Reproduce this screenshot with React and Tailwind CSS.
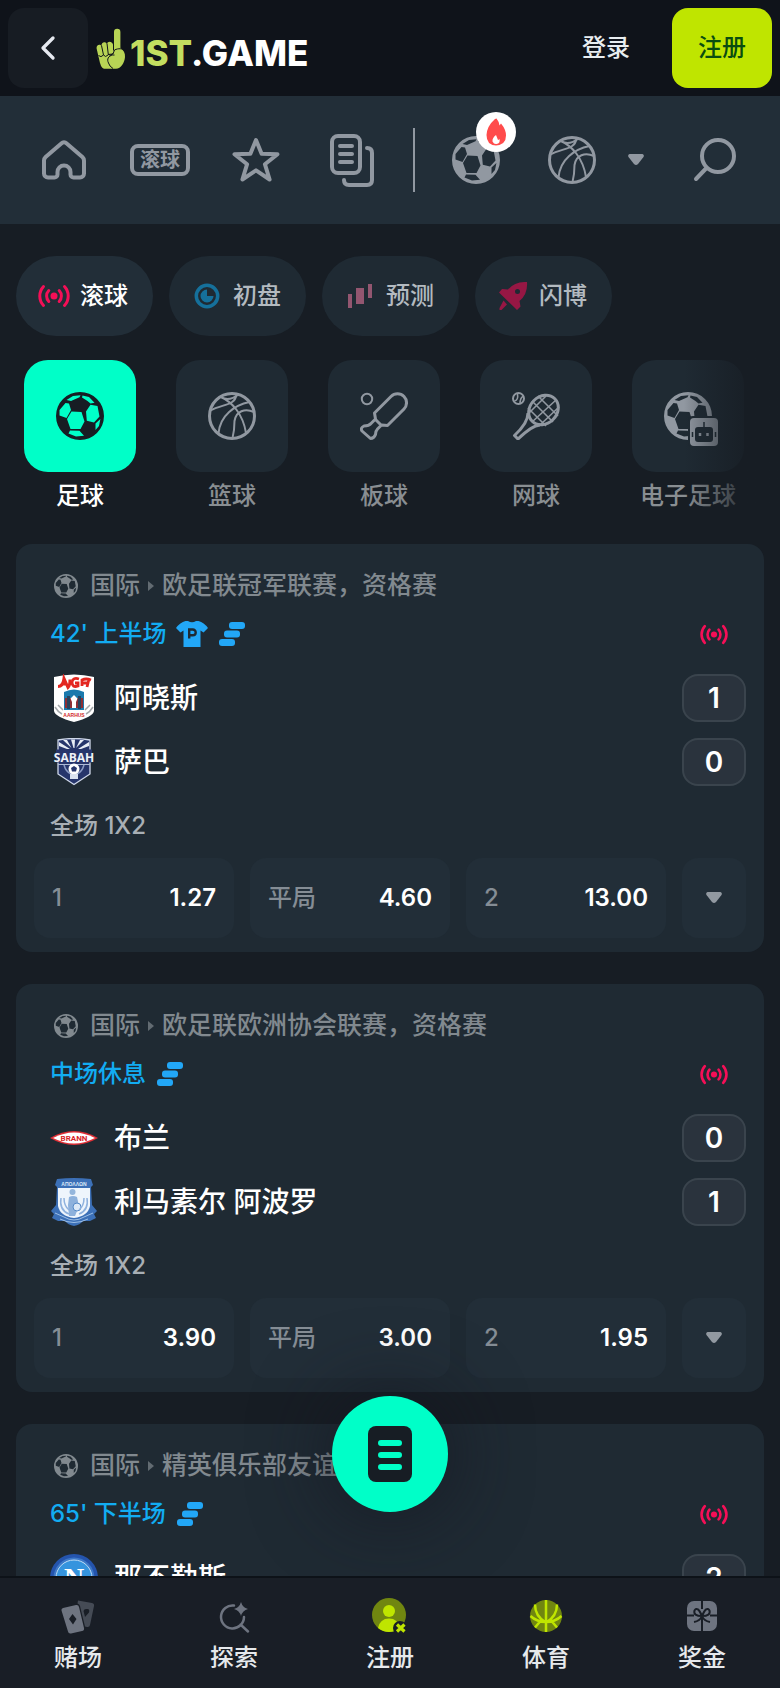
import React from 'react';
import { FiChevronLeft } from 'react-icons/fi';

const filters = [
  { icon: LiveIcon, label: '滚球', active: true },
  { icon: EarlyIcon, label: '初盘' },
  { icon: ForecastIcon, label: '预测' },
  { icon: RocketIcon, label: '闪博' },
];

const sports = [
  { icon: SoccerIcon, label: '足球', active: true },
  { icon: BasketballIcon, label: '篮球' },
  { icon: CricketIcon, label: '板球' },
  { icon: TennisIcon, label: '网球' },
  { icon: ESoccerIcon, label: '电子足球' },
];

const matches = [
  {
    league: '欧足联冠军联赛，资格赛',
    status: "42' 上半场",
    shirt: true,
    teams: [
      { crest: AarhusCrest, name: '阿晓斯', score: 1 },
      { crest: SabahCrest, name: '萨巴', score: 0 },
    ],
    odds: [['1', '1.27'], ['平局', '4.60'], ['2', '13.00']],
  },
  {
    league: '欧足联欧洲协会联赛，资格赛',
    status: '中场休息',
    teams: [
      { crest: BrannCrest, name: '布兰', score: 0 },
      { crest: ApollonCrest, name: '利马素尔 阿波罗', score: 1 },
    ],
    odds: [['1', '3.90'], ['平局', '3.00'], ['2', '1.95']],
  },
  {
    league: '精英俱乐部友谊赛',
    status: "65' 下半场",
    teams: [{ crest: NapoliCrest, name: '那不勒斯', score: 2 }],
    odds: [],
  },
];

const tabs = [
  { icon: CardsIcon, label: '赌场' },
  { icon: ExploreIcon, label: '探索' },
  { icon: RegisterIcon, label: '注册' },
  { icon: SportTabIcon, label: '体育' },
  { icon: GiftIcon, label: '奖金' },
];

function LogoHand() {
  return (
    <svg viewBox="0 0 30 41" className="w-[30px] h-[41px]" fill="#b8d455" stroke="#0f131a" strokeWidth="1">
      <path stroke="none" d="M18 22V4a3.200 3.200 0 0 1 6.400 0V20c3 2 5 5 4.600 9-.5 6-4 11.500-9 11.800H9C6 40.800 5 38 4 35L.6 20.500C0 17 4 15.500 5.500 18 5 14 9.500 13 11 16c.5-3 5-3 6 .5z" />
      <path fill="none" d="M5.500 17.500 7.500 27q2 3 4.500 0M11 15.500l1.300 11q2.500 2 4.500-1M17.500 15v7.500M2.500 27.500q2.500 2.500 5-.5M12.500 35c-2-4 0-7 4-8h2M12 26.500l5-.5 1.500-4c4-2 8-1.500 10 .5M12.500 35q1 3.500 4.500 5.500" />
    </svg>
  );
}

function HomeIcon() {
  return (
    <svg viewBox="0 0 48 48" className="size-12" fill="none" stroke="currentColor" strokeWidth="4" strokeLinejoin="round">
      <path d="M21.300 7.400a4 4 0 0 1 5.400 0L42.400 21a5 5 0 0 1 1.600 3.600V37.500a4 4 0 0 1-4 4h-6.500a3 3 0 0 1-3-3V36a6.500 6.500 0 0 0-13 0v2.500a3 3 0 0 1-3 3H8a4 4 0 0 1-4-4V24.600A5 5 0 0 1 5.600 21z" />
    </svg>
  );
}

function StarIcon() {
  return (
    <svg viewBox="0 0 48 48" className="size-12" fill="none" stroke="currentColor" strokeWidth="4" strokeLinejoin="round">
      <path d="M24 4 29.600 17.800 45.500 18.200 32.900 28.200 37.600 43.500 24 34.300 10.400 43.500 15.100 28.200 2.500 18.200 18.400 17.800z" />
    </svg>
  );
}

function BetsIcon() {
  return (
    <svg viewBox="0 0 48 56" className="w-12 h-14" fill="none" stroke="currentColor" strokeWidth="4" strokeLinecap="round">
      <rect x="4" y="4" width="28" height="37" rx="6" />
      <path d="M12 14h12M12 22h12M12 30h12M39 16q5 0 5 5V48q0 5-5 5H21q-5 0-5-5" />
    </svg>
  );
}

function SearchIcon() {
  return (
    <svg viewBox="0 0 48 48" className="size-12" fill="none" stroke="currentColor" strokeWidth="4" strokeLinecap="round">
      <circle cx="26" cy="20" r="16" />
      <path d="M14.500 32 4 43" />
    </svg>
  );
}

function Caret({ className = 'w-4 h-3' }) {
  return (
    <svg viewBox="0 0 16 12" className={className} fill="currentColor">
      <path d="M1.500 0h13q2.300 1 .8 3.200L10 10q-2 2-4 0L.7 3.200Q-.8 1 1.500 0z" />
    </svg>
  );
}

function SoccerIcon({ className = 'size-12' }) {
  return (
    <svg viewBox="0 0 48 48" className={className} fill="currentColor" fillRule="evenodd">
      <path d="M24 0a24 24 0 1 0 0 48a24 24 0 1 0 0-48zM11 27 15.500 19.500 25.500 20 28.500 29.500 24.500 37 14.500 37zM30 19.500 34.500 12.800 41.500 14 43.500 24.500 38 30.500 30.800 28.800zM3.500 18 9.500 11 13 11.500 15 18 10.500 26 3.500 23.500zM10.500 8 17 4 24.500 3.300 23.500 5.200 15 9zM26.500 3.500 33 5 38.500 10.800 34.500 11.500 31.500 9 26 5.500zM14 38.500 23.500 38.800 28 43.800 20 44.500 12.500 41.500zM39.500 31.500 44.400 27 43 34 39.500 38z" />
    </svg>
  );
}

function BasketballIcon() {
  return (
    <svg viewBox="0 0 48 48" className="size-12" fill="none" stroke="currentColor" strokeWidth="2">
      <circle cx="24" cy="24" r="22.500" strokeWidth="3" />
      <path d="M13 5C24 10 35 22 38 41M28.500 2.500C27 14 14 12 2.500 18.500M13.500 5.500q8 4 17-3M41.500 10C27 13 12 23 10.500 41.500M46 20C37 16 28 19 26.500 29Q26.500 38 24.500 46" />
    </svg>
  );
}

function CricketIcon() {
  return (
    <svg viewBox="0 0 48 48" className="size-12" fill="none" stroke="currentColor" strokeWidth="3" strokeLinejoin="round">
      <circle cx="7" cy="7" r="5.200" strokeWidth="2" />
      <path d="M14.500 21 31 4.500a9 9 0 0 1 13 0a9 9 0 0 1 0 12.500L27.500 33.500l-6-.5-4 4q-2 2-2 5.500-1.500 4-5 4L2 39q-2-3 2-5 5 0 7-2.500l4.500-4.500zM15.500 27.500l5.500 5.500" />
    </svg>
  );
}

function TennisIcon() {
  return (
    <svg viewBox="0 0 48 48" className="size-12" fill="none" stroke="currentColor" strokeWidth="2">
      <circle cx="6.500" cy="6.500" r="5.500" />
      <path d="M2.500 9q4-1 3-7M12 4q-4 1-4 8M20 9 41 30M26 4 46 24M16 16 34 34M16 22 34 4M20 30 44 8M28 33 47 15" strokeWidth="1.600" />
      <ellipse cx="31.500" cy="18" rx="16" ry="13.500" transform="rotate(-45 31.500 18)" strokeWidth="3" />
      <path d="M16 21q0 10-13.500 22.500l3.500 3.500Q20 33.500 28 33" strokeWidth="3" strokeLinejoin="round" />
    </svg>
  );
}

function ESoccerIcon() {
  return (
    <div className="relative">
      <SoccerIcon />
      <svg viewBox="0 0 32 32" className="absolute left-[24px] top-[24px] size-8">
        <rect x="0" y="0" width="32" height="32" rx="5" className="fill-[#1f2a33]" />
        <rect x="2" y="2" width="28" height="28" rx="4" fill="currentColor" />
        <rect x="7" y="11" width="18" height="15" rx="3" className="fill-[#1f2a33]" />
        <path d="M16 6v5M4.500 16v5M27.500 16v5" className="stroke-[#1f2a33]" strokeWidth="1.500" />
        <path d="M12 17v3M19.500 17v3" stroke="currentColor" strokeWidth="2.500" />
      </svg>
    </div>
  );
}

function LiveIcon({ className = 'w-8 h-6' }) {
  return (
    <svg viewBox="0 0 32 24" className={className} fill="none" stroke="#f50f57" strokeWidth="3" strokeLinecap="round">
      <circle cx="16" cy="12" r="3.500" fill="#f50f57" stroke="none" />
      <path d="M5.500 2.500a14 14 0 0 0 0 19M10.800 6.500a8 8 0 0 0 0 11M26.500 2.500a14 14 0 0 1 0 19M21.200 6.500a8 8 0 0 1 0 11" />
    </svg>
  );
}

function EarlyIcon() {
  return (
    <svg viewBox="0 0 32 32" className="size-8" fill="none">
      <circle cx="16" cy="16" r="10.700" stroke="#15709b" strokeWidth="3.500" />
      <path d="M16 9.500V16h6.500A6.500 6.500 0 1 1 16 9.500z" fill="#15709b" />
    </svg>
  );
}

function ForecastIcon() {
  return (
    <svg viewBox="0 0 32 32" className="size-8" fill="#935670">
      <path d="M4 14h4v14H4zM12 8h8v16h-8zM24 4h4v14h-4z" />
    </svg>
  );
}

function RocketIcon() {
  return (
    <svg viewBox="0 0 32 32" className="size-8" fill="#961744" fillRule="evenodd">
      <path d="M30 2Q18 1 11 9.500L5 9 2 12.500 20 30 23.500 26.500 22.500 21Q31 14 30 2zM20.500 9a2.500 2.500 0 1 1 0 5 2.500 2.500 0 1 1 0-5zM6.500 20.500 10 24.500 4.500 30H2.500V28z" />
    </svg>
  );
}

function ShirtIcon() {
  return (
    <svg viewBox="0 0 32 28" className="w-8 h-7">
      <path d="M9.500 1h2.500q4 2.500 8 0h2.500Q28 2.500 32 8l-4.500 4.500L24.500 10.500V27H7.500V10.500L4.500 12.500 0 8Q4 2.500 9.500 1z" fill="#22a7f7" />
      <path d="M13.200 18.500V9.500h3.600a2.900 2.900 0 0 1 0 5.800h-3.600" fill="none" stroke="#1f2a33" strokeWidth="2.400" />
    </svg>
  );
}

function StackIcon() {
  return (
    <svg viewBox="0 0 28 26" className="w-7 h-[26px]" fill="#22a7f7">
      <rect x="11" y="1" width="16" height="7" rx="3" />
      <rect x="6" y="9.500" width="16" height="7" rx="3" />
      <rect x="1" y="18" width="16" height="7" rx="3" />
    </svg>
  );
}

function AarhusCrest() {
  return (
    <svg viewBox="0 0 48 48" className="size-12">
      <path d="M4 3Q24-2 44 3V37Q43 43 24 48 5 43 4 37z" fill="#fff" />
      <path d="M8 12.500q5 0 6-8l4 9q2-2 2-8M12 10h5" fill="none" stroke="#e32620" strokeWidth="3" />
      <path d="M29 5q-6-2-7 3 0 6 6 4V9h-3M41 6q-5-2-9 0v6M32 9h6M39 5l-2 8" fill="none" stroke="#e32620" strokeWidth="2.800" />
      <path d="M14 18q10-5 20 0V36H14z" fill="#1b79ad" />
      <path d="M15 24h18v10H15z" fill="#8c2e35" />
      <path d="M17 22h3v13h-3zM28 22h3v13h-3z" fill="#29435d" />
      <path d="M24 21 27.500 24.500 26 28V34H22V28L20.500 24.500z" fill="#fff" />
      <path d="M5 33q3 5 7 7M43 33q-3 5-7 7M8 31l5 5M40 31l-5 5" stroke="#a3a7aa" strokeWidth="1.500" fill="none" />
      <text x="24" y="43" textAnchor="middle" className="font-['Liberation_Sans'] text-[5px] font-bold" fill="#d22b2b">AARHUS</text>
    </svg>
  );
}

function SabahCrest() {
  return (
    <svg viewBox="0 0 48 48" className="size-12">
      <path d="M8 2Q24-1 40 2V36L24 46.500 8 36z" fill="#26356b" stroke="#cfd8ea" strokeWidth="1.300" />
      <path d="M20 11 9 4v4l8 3zM21.500 10 13 2h4zM23.500 10 21 1.500h4l-.5 8.500zM26 10 30 2h4zM28 11l11-7v4l-8 3z" fill="#e8edf5" />
      <rect x="6" y="11.500" width="36" height="13" fill="#26356b" />
      <text x="24" y="23.500" textAnchor="middle" className="font-['Open_Sans'] text-[12px] font-bold" fill="#eef2f8">SABAH</text>
      <path d="M8 26.500h32" stroke="#aebbd6" />
      <path d="M14 27q2 7 7 9M34 27q-2 7-7 9" stroke="#8b9bc4" strokeWidth="1.500" fill="none" />
      <circle cx="24" cy="31" r="5.500" fill="#fff" />
      <path d="M24 28l3 2-1 3.500h-4l-1-3.500z" fill="#26356b" />
      <path d="M20 36h8v5h-8z" fill="#dbe3f0" />
    </svg>
  );
}

function BrannCrest() {
  return (
    <svg viewBox="0 0 48 48" className="size-12">
      <path d="M0 24Q12 17 24 17T48 24Q36 31 24 31T0 24z" fill="#e02f36" />
      <path d="M3 24Q14 18.500 24 18.500T45 24Q34 29.500 24 29.500T3 24z" fill="#fff" />
      <text x="24" y="26.500" textAnchor="middle" className="font-['Roboto'] text-[8px] font-bold" fill="#d81f2a">BRANN</text>
    </svg>
  );
}

function ApollonCrest() {
  return (
    <svg viewBox="0 0 48 48" className="size-12">
      <path d="M7 1Q24-1 41 1L43 7 41 9 42 27 47 33 44 36 46 40 40 43H33Q30 47 24 48 18 47 15 43H8L2 40 4 36 1 33 6 27 7 9 5 7z" fill="#3c70b7" />
      <path d="M8 10h32V28Q38 38 24 40 10 38 8 28z" fill="#eef5fc" />
      <text x="24" y="8" textAnchor="middle" className="font-['Liberation_Sans'] text-[5px] font-bold" fill="#dce9f7">ΑΠΟΛΛΩΝ</text>
      <circle cx="22.500" cy="14" r="3" fill="#94b6dc" />
      <path d="M19 19q4-2 8 0l2 9-4 10h-6l-1-11z" fill="#8db1dc" />
      <circle cx="27" cy="29" r="4" fill="#dce9f7" stroke="#568ac7" />
      <path d="M11 20q-2 12 8 16M37 20q2 12-8 16M14 20q0 8 5 12M34 20q0 8-5 12" stroke="#8fb2de" strokeWidth="1.500" fill="none" />
      <path d="M5 35 14 39Q24 45 34 39L43 35M10 41q14 7 28 0" fill="none" stroke="#9dbfe6" />
    </svg>
  );
}

function NapoliCrest() {
  return (
    <svg viewBox="0 0 48 48" className="size-12">
      <circle cx="24" cy="24" r="24" fill="#2454ad" />
      <circle cx="24" cy="24" r="20.500" fill="#3c78c8" />
      <circle cx="24" cy="24" r="18" fill="#3594de" stroke="#bddcf5" />
      <text x="24" y="33" textAnchor="middle" className="font-['Liberation_Serif'] text-[28px] font-bold" fill="#fff">N</text>
    </svg>
  );
}

function CardsIcon() {
  return (
    <svg viewBox="0 0 36 36" className="size-9" fillRule="evenodd">
      <path d="M18 2.500 32 5q2.500.5 2 3L30 27q-.5 2.500-3 2L25 28.500 20 8Q19.500 6 17.500 5.500zM26 11q-2 0-2.500 2l1.500 6 4-4.500q1-3.500-1.500-3.500z" fill="#454b55" />
      <path d="M3 10 16 7q2.500-.5 3 2l5 21q.5 2.500-2 3L11 35.500q-2.500.5-3-2L1.500 12.500Q1 10.500 3 10zM12.500 16 9 21l4 5.500 3.500-5.500z" fill="#6e7480" />
    </svg>
  );
}

function ExploreIcon() {
  return (
    <svg viewBox="0 0 36 36" className="size-9" fill="none" stroke="#6e7480" strokeWidth="2.500" strokeLinecap="round">
      <path d="M18 7.500A11.500 11.500 0 1 0 28 19M24.500 26.500 32 33.500" />
      <path d="M25 4q1.500 5.500 7 7-5.500 1.500-7 7-1.500-5.500-7-7 5.500-1.500 7-7z" fill="#6e7480" stroke="none" />
    </svg>
  );
}

function RegisterIcon() {
  return (
    <svg viewBox="0 0 36 36" className="size-9">
      <circle cx="17" cy="17" r="17" fill="#708610" />
      <circle cx="17" cy="13" r="6" fill="#bfe500" />
      <path d="M6 30Q8 20.500 17 20.500T28 30Q23 34 17 34T6 30z" fill="#bfe500" />
      <circle cx="28" cy="30" r="7" fill="#191e26" />
      <path d="m25 26.500 7.500 7M32.500 26.500l-7.500 7" stroke="#bfe500" strokeWidth="3.200" />
    </svg>
  );
}

function SportTabIcon() {
  return (
    <svg viewBox="0 0 36 36" className="size-9" fill="none" stroke="#bfe500" strokeWidth="3">
      <circle cx="18" cy="18" r="16" fill="#708610" stroke="none" />
      <path d="M18 2v32M7 6.500q0 12 11 18 11-6 11-18M2.500 18Q9 24 18 24T33.500 18M7 29.500 12.500 23M29 29.500 23.500 23" strokeWidth="2.500" />
    </svg>
  );
}

function GiftIcon() {
  return (
    <svg viewBox="0 0 36 36" className="size-9" fill="none" stroke="#191e26" strokeWidth="2">
      <rect x="3" y="3" width="30" height="30" rx="7" fill="#6e7480" stroke="none" />
      <path d="M18 3v8M18 19v14M3 17.500h7M26 17.500h7M18 18Q9 18 10.500 12.500q3-5 7.500 5.500 4.500-10.500 7.500-5.500Q27 18 18 18zM18 18q-2 5-8 6M18 18q2 5 8 6" />
    </svg>
  );
}

function MatchCard({ match }) {
  return (
    <article className="rounded-2xl bg-[#1f2a33] px-[18px] pt-[18px] pb-[14px]">
      <div className="flex h-12 items-center pl-5 text-[25px] font-medium text-[#81898f]">
        <SoccerIcon className="size-6" />
        <span className="ml-3">国际</span>
        <svg viewBox="0 0 6 10" className="mx-2 w-[6px] h-[10px]" fill="#626b72">
          <path d="M0 0 6 5 0 10z" />
        </svg>
        <span>{match.league}</span>
      </div>

      <div className="flex h-12 items-center gap-[10px] pl-4 pr-[18px] text-2xl font-medium text-[#12acf2]">
        <span>{match.status}</span>
        {match.shirt && <ShirtIcon />}
        <StackIcon />
        <LiveIcon className="ml-auto w-7 h-[21px]" />
      </div>

      <div className="mt-4 flex flex-col gap-4">
        {match.teams.map((team) => (
          <div key={team.name} className="flex h-12 items-center pl-4 text-[28px] font-medium text-white">
            <team.crest />
            <span className="ml-4">{team.name}</span>
            <span className="ml-auto flex h-12 w-16 items-center justify-center rounded-2xl border-2 border-[#3a444d] bg-[#2a333d] font-semibold">
              {team.score}
            </span>
          </div>
        ))}
      </div>

      {match.odds.length > 0 && (
        <>
          <div className="mt-4 mb-2 flex h-12 items-center pl-4 text-2xl font-medium text-[#a8afb5]">全场 1X2</div>
          <div className="flex gap-4">
            {match.odds.map(([name, price]) => (
              <button key={name} type="button" className="flex h-20 flex-1 items-center justify-between rounded-2xl bg-[#222e38] px-[18px] text-2xl">
                <span className="font-medium text-[#858d95]">{name}</span>
                <span className="font-semibold text-white">{price}</span>
              </button>
            ))}
            <button type="button" aria-label="更多" className="flex h-20 w-16 items-center justify-center rounded-2xl bg-[#222e38] text-[#9299a1]">
              <Caret />
            </button>
          </div>
        </>
      )}
    </article>
  );
}

export default function App() {
  return (
    <div className="relative flex h-screen flex-col overflow-hidden bg-[#171d24] font-['Inter','Noto_Sans_CJK_SC',sans-serif]">
      <header className="flex h-24 shrink-0 items-center bg-[#0f131a] px-2">
        <button type="button" aria-label="返回" className="flex size-20 items-center justify-center rounded-2xl bg-[#171c23] text-[#e6e9f0]">
          <FiChevronLeft className="size-10" />
        </button>
        <a href="#home" className="ml-2 flex items-center gap-1 text-[35px] font-extrabold">
          <LogoHand />
          <span className="pt-[9px] leading-9 text-white">
            <span className="text-[#c3de60]">1ST</span>.GAME
          </span>
        </a>
        <a href="#login" className="mr-[42px] ml-auto text-2xl font-medium text-[#e8edf0]">登录</a>
        <button type="button" className="h-20 w-[100px] rounded-2xl bg-[#bfe500] text-2xl font-medium text-[#0a4d10]">注册</button>
      </header>

      <nav className="flex h-32 shrink-0 items-center bg-[#222e38] px-4 text-[#9198a1]">
        <a href="#home" aria-label="首页" className="flex w-24 justify-center"><HomeIcon /></a>
        <a href="#live" className="flex w-24 justify-center">
          <span className="flex h-8 w-[60px] items-center justify-center rounded-lg border-4 border-[#9198a1] text-xl font-bold">滚球</span>
        </a>
        <a href="#favorites" aria-label="收藏" className="flex w-24 justify-center"><StarIcon /></a>
        <a href="#bets" aria-label="投注" className="flex w-24 justify-center"><BetsIcon /></a>
        <span className="mx-[13px] h-16 w-[2px] bg-[#9198a1]" />
        <a href="#soccer" aria-label="足球" className="relative flex w-24 justify-center">
          <SoccerIcon />
          <span className="absolute -top-6 right-2 flex size-10 items-center justify-center rounded-full bg-white">
            <svg viewBox="0 0 20 28" className="w-5 h-7" fillRule="evenodd">
              <path d="M10.500.5q2.500 3 3 7l1.500-2q5 6 5 12 0 9-10 10Q.5 27 .5 17 1 8 9 1zM10 17q-4 3-3.500 6.500 1.500 3 4 2.500 4-.5 3-5-1 1-1.500 1z" fill="#ff4b4b" />
            </svg>
          </span>
        </a>
        <a href="#basketball" aria-label="篮球" className="flex w-24 justify-center"><BasketballIcon /></a>
        <button type="button" aria-label="更多运动" className="flex w-8 justify-center"><Caret /></button>
        <button type="button" aria-label="搜索" className="ml-auto flex w-24 justify-center"><SearchIcon /></button>
      </nav>

      <main className="min-h-0 flex-1 overflow-hidden">
        <div className="flex gap-4 px-4 pt-8">
          {filters.map((item) => (
            <button
              key={item.label}
              type="button"
              className={`flex h-20 w-[137px] items-center gap-[10px] rounded-full pl-[22px] text-2xl font-medium ${item.active ? 'bg-[#222e38] text-white' : 'bg-[#1f2a33] text-[#b3bac0]'}`}
            >
              <item.icon />
              {item.label}
            </button>
          ))}
        </div>

        <div className="relative">
          <div className="flex gap-10 overflow-hidden px-6 pt-6">
            {sports.map((item) => (
              <button key={item.label} type="button" className="flex w-28 shrink-0 flex-col items-center">
                <span className={`flex size-28 items-center justify-center rounded-3xl ${item.active ? 'bg-[#00ffc8] text-[#171d24]' : 'bg-[#1f2a33] text-[#9198a1]'}`}>
                  <item.icon />
                </span>
                <span className={`mt-1 text-2xl leading-10 font-medium whitespace-nowrap ${item.active ? 'text-white' : 'text-[#898e92]'}`}>
                  {item.label}
                </span>
              </button>
            ))}
          </div>
          <div className="pointer-events-none absolute inset-y-0 right-0 w-24 bg-linear-to-r from-[#171d24]/0 to-[#171d24] to-80%" />
        </div>

        <div className="mt-7 flex flex-col gap-8 px-4">
          {matches.map((match) => (
            <MatchCard key={match.league} match={match} />
          ))}
          <div className="h-24" />
        </div>
      </main>

      <button
        type="button"
        aria-label="投注单"
        className="absolute bottom-44 left-1/2 flex size-[116px] -translate-x-1/2 items-center justify-center rounded-full bg-[#00ffc8] shadow-[0_0_80px_rgba(20,22,32,0.8)]"
      >
        <svg viewBox="0 0 44 56" className="w-11 h-14">
          <rect width="44" height="56" rx="8" fill="#171d24" />
          <path d="M13 17h18M13 29h18M13 41h18" stroke="#00ffc8" strokeWidth="6" strokeLinecap="round" />
        </svg>
      </button>

      <nav className="relative grid h-28 shrink-0 grid-cols-5 border-t-2 border-[#0d1218] bg-[#191e26]">
        {tabs.map((tab) => (
          <a key={tab.label} href={`#${tab.label}`} className="flex flex-col items-center pt-5 text-2xl font-medium text-[#e6e9ec]">
            <tab.icon />
            <span className="mt-1 leading-10">{tab.label}</span>
          </a>
        ))}
      </nav>
    </div>
  );
}
